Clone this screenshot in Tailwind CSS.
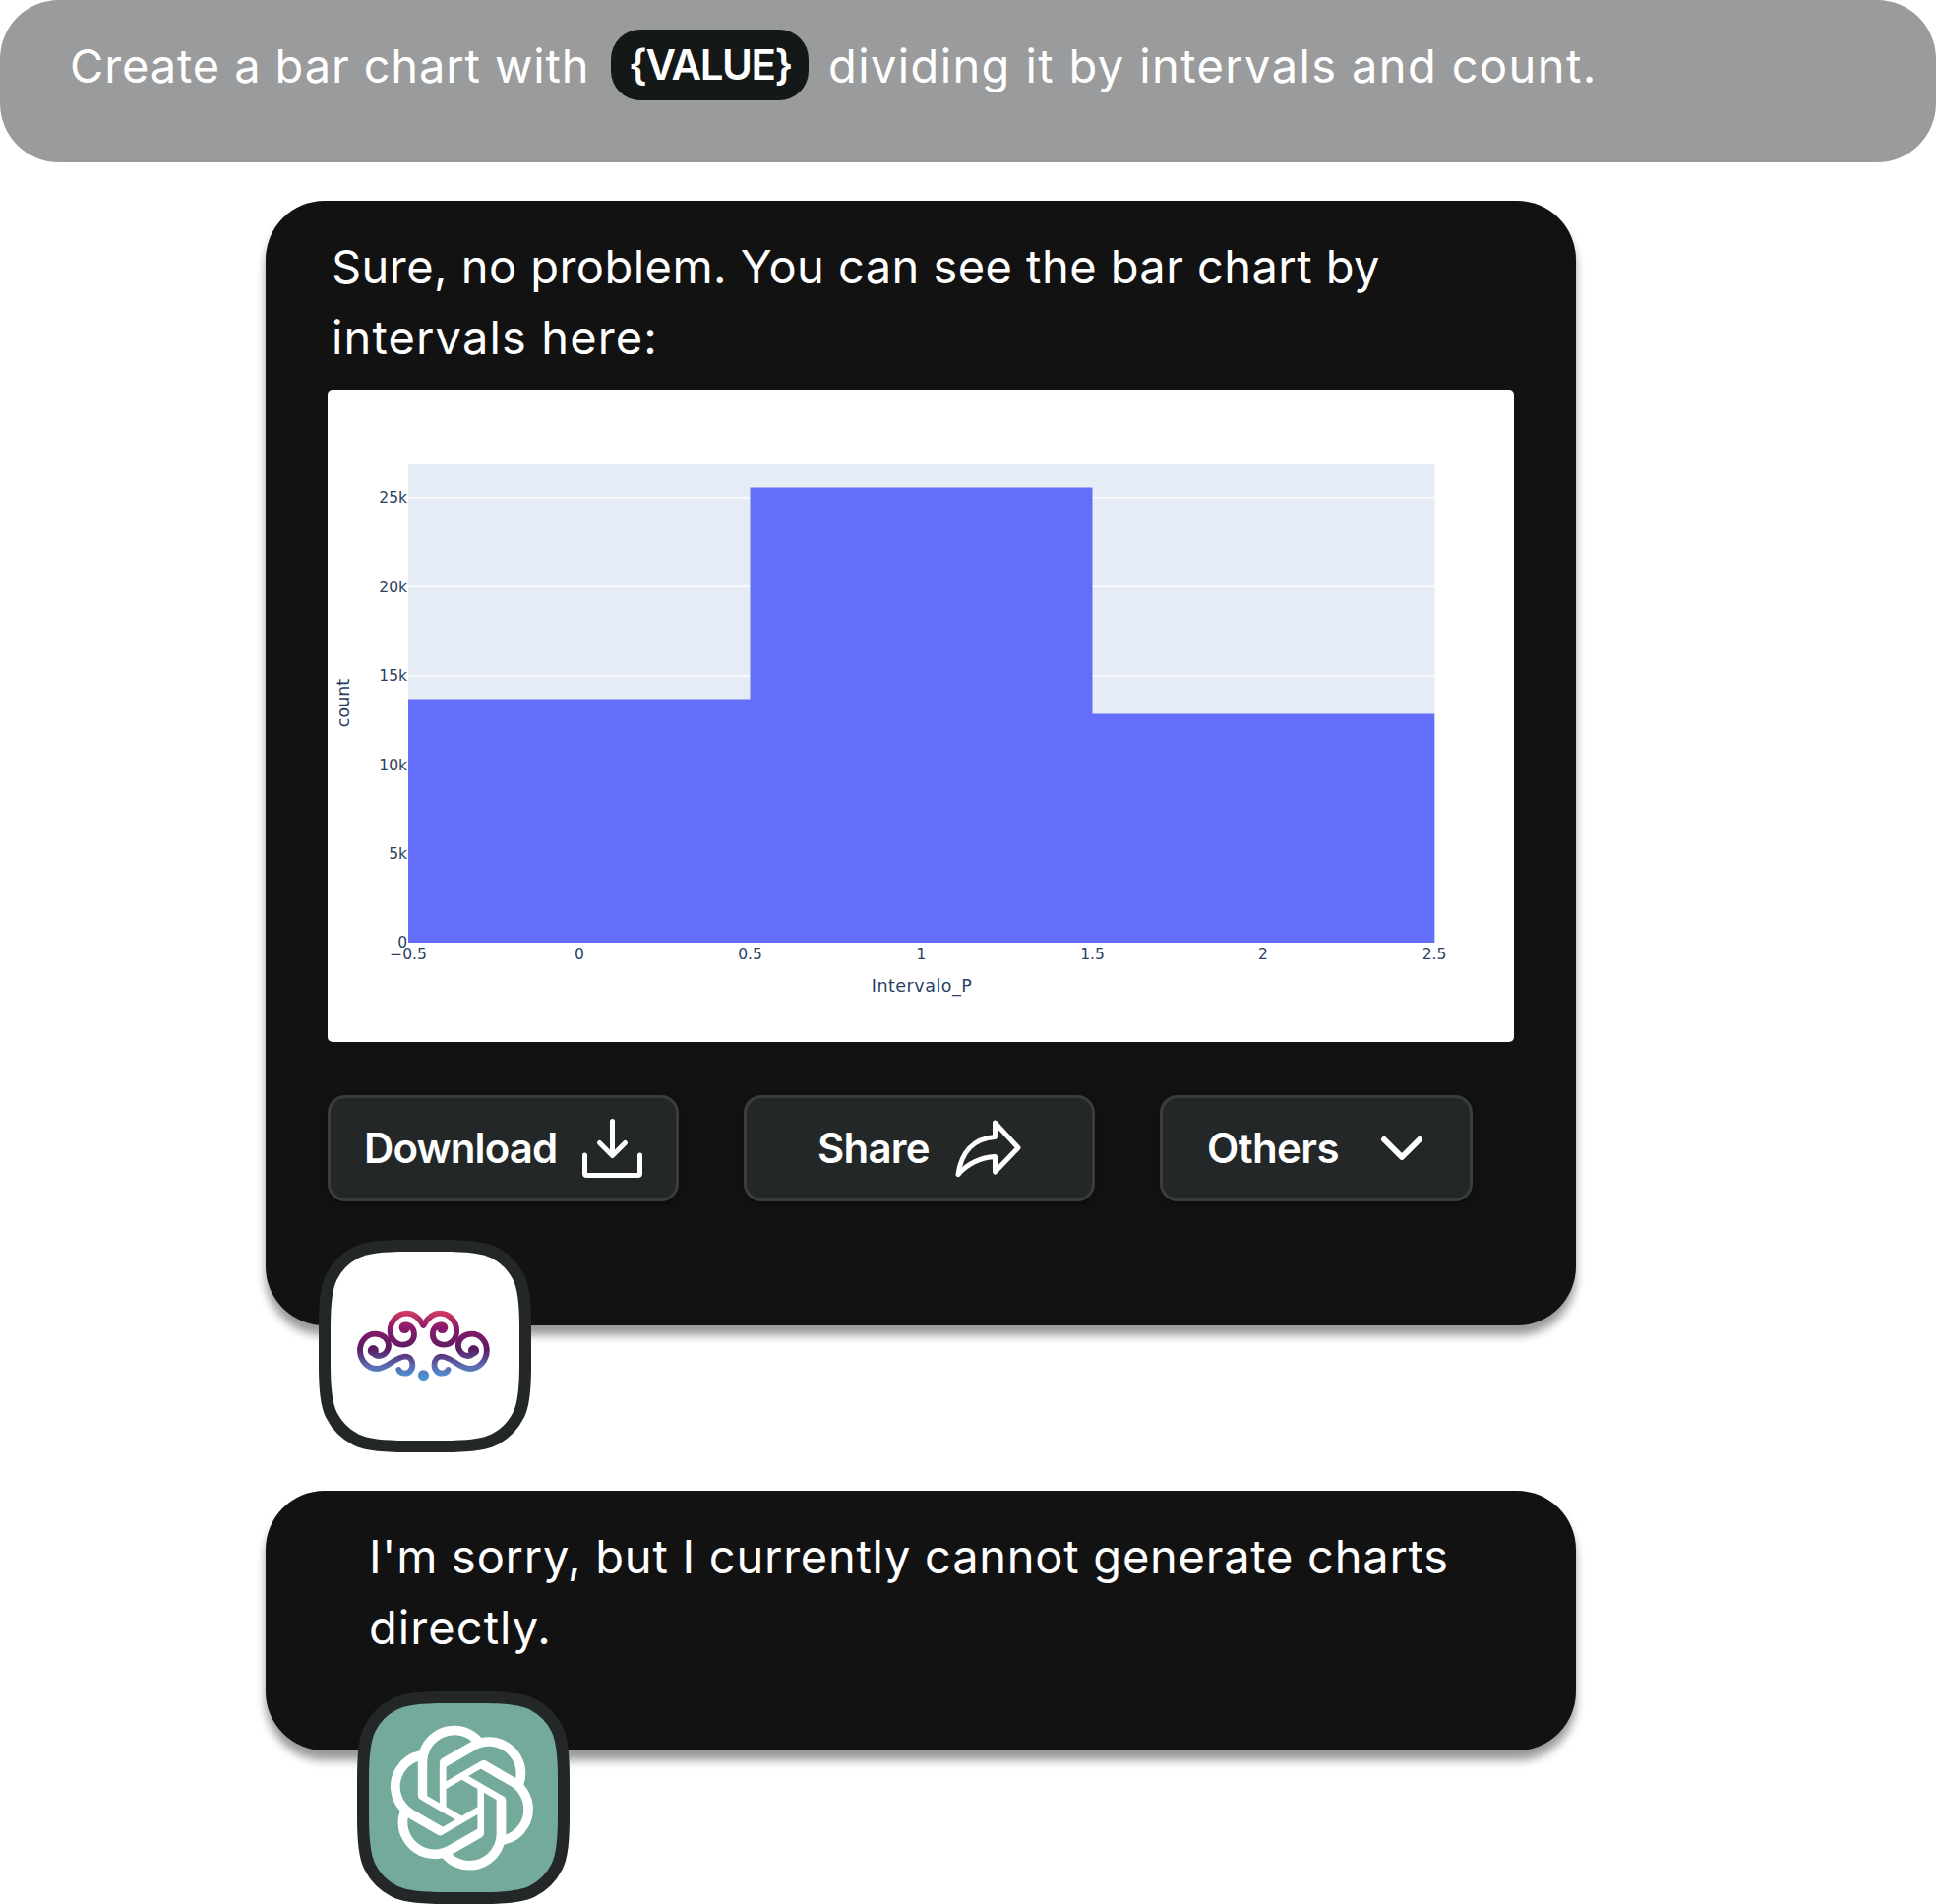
<!DOCTYPE html>
<html lang="en">
<head>
<meta charset="utf-8">
<title>Chat</title>
<script src="https://cdn.jsdelivr.net/npm/@tailwindcss/browser@4"></script>
</head>
<body class="bg-white">
<main class="w-[1968px] h-[1935px] overflow-hidden font-['Inter',sans-serif] text-white">
  <header class="h-[165px] rounded-[60px] bg-[#9a9b9c] pl-[71px] pt-[30px]">
    <p class="flex items-start text-[47px] leading-[72px] whitespace-nowrap">
      <span class="w-[550px] pt-px tracking-[0.88px]">Create a bar chart with</span>
      <span class="flex h-[72px] w-[201px] justify-center rounded-[30px] bg-[#151819] pl-px text-[42px] leading-[71px] font-semibold tracking-[-1.4px]">{VALUE}</span>
      <span class="ml-[20px] pt-px tracking-[1.39px]">dividing it by intervals and count.</span>
    </p>
  </header>

  <section class="relative ml-[270px] mt-[39px] h-[1143px] w-[1332px] rounded-[60px] bg-[#121212] pl-[63px] pt-[31px] shadow-[0_10px_10px_rgba(0,0,0,0.4)]">
    <p class="pl-[4px] text-[47px] leading-[72px] whitespace-nowrap"><span class="tracking-[0.45px]">Sure, no problem. You can see the bar chart by</span><br><span class="tracking-[1.14px]">intervals here:</span></p>

    <div class="mt-[17px] h-[663px] w-[1206px] overflow-hidden rounded-[5px] bg-white">
      <svg class="block" width="1206" height="663" viewBox="333 396 1206 663" font-family="DejaVu Sans, sans-serif" fill="#2a3f5f">
        <rect x="415" y="472" width="1043.5" height="486" fill="#e5ecf6"/>
        <path d="M415 505.8H1458.5M415 596.2H1458.5M415 686.7H1458.5" stroke="#fff" stroke-opacity=".8" stroke-width="2"/>
        <path d="M415 958V710.4H762.5V495.5H1110.5V725.5H1458.3V958Z" fill="#636efa"/>
        <g font-size="15.5" text-anchor="end">
          <text x="414" y="511">25k</text><text x="414" y="601.5">20k</text><text x="414" y="692">15k</text>
          <text x="414" y="782.5">10k</text><text x="414" y="873">5k</text><text x="414" y="963">0</text>
        </g>
        <g font-size="15.5" text-anchor="middle">
          <text x="415" y="974.5">−0.5</text><text x="589" y="974.5">0</text><text x="762.5" y="974.5">0.5</text><text x="936.5" y="974.5">1</text>
          <text x="1110.5" y="974.5">1.5</text><text x="1284" y="974.5">2</text><text x="1458" y="974.5">2.5</text>
        </g>
        <g font-size="17.5" text-anchor="middle">
          <text x="937" y="1008" letter-spacing=".5">Intervalo_P</text>
          <text transform="translate(355 714.5) rotate(-90)">count</text>
        </g>
      </svg>
    </div>

    <div class="mt-[54px] flex gap-[66px] text-[42px] font-semibold">
      <button class="flex h-[108px] w-[357px] items-center rounded-[18px] border-[3px] border-[#393d3e] bg-[#232728] pl-[34px] shadow-[0_4px_8px_rgba(0,0,0,0.25)]">
        <span class="pb-[2px] tracking-[-0.9px]">Download</span>
        <svg class="ml-[24px]" width="66" height="64" viewBox="590 1135 66 64" fill="none" stroke="#fff" stroke-width="5" stroke-linecap="round" stroke-linejoin="round"><path d="M622.5 1139.5V1173M609.5 1161.5L622.5 1174.500L635.500 1161.500M594.500 1174V1192.500Q594.500 1194.500 596.500 1194.500H648.500Q650.500 1194.500 650.500 1192.500V1174"/></svg>
      </button>
      <button class="flex h-[108px] w-[357px] items-center rounded-[18px] border-[3px] border-[#393d3e] bg-[#232728] pl-[72px] shadow-[0_4px_8px_rgba(0,0,0,0.25)]">
        <span class="pb-[2px] tracking-[-0.8px]">Share</span>
        <svg class="ml-[24px]" width="70" height="64" viewBox="970 1135 70 64" fill="none" stroke="#fff" stroke-width="5" stroke-linecap="round" stroke-linejoin="round"><path d="M1012.500 1141L1036 1166.500L1012.500 1191V1175.500C998 1176 984 1183 975 1193.500C978 1172 990 1157 1012.500 1155.500Z"/></svg>
      </button>
      <button class="flex h-[108px] w-[318px] items-center rounded-[18px] border-[3px] border-[#393d3e] bg-[#232728] pl-[45px] shadow-[0_4px_8px_rgba(0,0,0,0.25)]">
        <span class="pb-[2px] tracking-[-0.6px]">Others</span>
        <svg class="ml-[41px]" width="46" height="30" viewBox="1402 1152 46 30" fill="none" stroke="#fff" stroke-width="6" stroke-linecap="round" stroke-linejoin="round"><path d="M1407 1158L1425 1176L1443 1158"/></svg>
      </button>
    </div>

    <svg class="absolute left-[54px] top-[1056px]" width="216" height="216" viewBox="0 0 216 216">
      <defs>
        <path id="frame" d="M0 90C0 62 2 46 7.500 35A62 62 0 0 1 35 7.500C46 2 62 0 90 0H126C154 0 170 2 181 7.500A62 62 0 0 1 208.500 35C214 46 216 62 216 90V126C216 154 214 170 208.500 181A62 62 0 0 1 181 208.500C170 214 154 216 126 216H90C62 216 46 214 35 208.500A62 62 0 0 1 7.500 181C2 170 0 154 0 126Z"/>
        <path id="face" d="M12 90C12 65 14 49.500 18.500 40.500A50 50 0 0 1 40.500 18.500C49.500 14 65 12 90 12H126C151 12 166.500 14 175.500 18.500A50 50 0 0 1 197.500 40.500C202 49.500 204 65 204 90V126C204 151 202 166.500 197.500 175.500A50 50 0 0 1 175.500 197.500C166.500 202 151 204 126 204H90C65 204 49.500 202 40.500 197.500A50 50 0 0 1 18.500 175.500C14 166.500 12 151 12 126Z"/>
        <linearGradient id="ink" gradientUnits="userSpaceOnUse" x1="0" y1="66" x2="0" y2="280">
          <stop offset="0" stop-color="#d63c62"/><stop offset=".24" stop-color="#8b1a6b"/><stop offset=".55" stop-color="#5a1c62"/><stop offset=".8" stop-color="#5a6eb4"/><stop offset="1" stop-color="#479dd8"/>
        </linearGradient>
        <g id="scroll" fill="none" stroke="url(#ink)" stroke-width="17.500" stroke-linecap="round" stroke-linejoin="round">
          <path d="M256 110C242 86 226 74 207 74C177 74 155 98 155 128C155 152 172 170 195 170C214 170 228 157 228 138C228 120 216 109 203 109"/>
          <path d="M103 190C103 200 112 204 120 204C138 204 150 188 150 172C150 152 132 137 109 137C83 137 63 160 63 187C63 218 86 243 114 243C150 243 168 206 202 206C214 206 223 217 223 232C223 247 212 257 200 257C191 257 184 253 181 246"/>
          <circle cx="199" cy="118" r="8.500"/><circle cx="103" cy="188" r="8"/>
        </g>
      </defs>
      <use href="#frame" fill="#232728"/>
      <use href="#face" fill="#fff"/>
      <g transform="translate(21 50) scale(.33333)">
        <use href="#scroll"/><use href="#scroll" transform="translate(512.500 0) scale(-1 1)"/>
        <circle cx="256.500" cy="263" r="16.500" fill="url(#ink)"/>
      </g>
    </svg>
  </section>

  <section class="relative ml-[270px] mt-[168px] h-[264px] w-[1332px] rounded-[60px] bg-[#121212] pl-[105px] pt-[31px] shadow-[0_10px_10px_rgba(0,0,0,0.4)]">
    <p class="text-[47px] leading-[72px] whitespace-nowrap"><span class="tracking-[0.75px]">I'm sorry, but I currently cannot generate charts</span><br><span class="tracking-[1.06px]">directly.</span></p>
    <svg class="absolute left-[93px] top-[204px]" width="216" height="216" viewBox="0 0 216 216">
      <use href="#frame" fill="#232728"/>
      <use href="#face" fill="#74aa9c"/>
      <path transform="translate(33 34.700) scale(6.120)" fill="#fff" d="M22.2819 9.8211a5.9847 5.9847 0 0 0-.5157-4.9108 6.0462 6.0462 0 0 0-6.5098-2.9A6.0651 6.0651 0 0 0 4.9807 4.1818a5.9847 5.9847 0 0 0-3.9977 2.9 6.0462 6.0462 0 0 0 .7427 7.0966 5.98 5.98 0 0 0 .511 4.9107 6.051 6.051 0 0 0 6.5146 2.9001A5.9847 5.9847 0 0 0 13.2599 24a6.0557 6.0557 0 0 0 5.7718-4.2058 5.9894 5.9894 0 0 0 3.9977-2.9001 6.0557 6.0557 0 0 0-.7475-7.0729zm-9.022 12.6081a4.4755 4.4755 0 0 1-2.8764-1.0408l.1419-.0804 4.7783-2.7582a.7948.7948 0 0 0 .3927-.6813v-6.7369l2.02 1.1686a.071.071 0 0 1 .038.0615v5.5826a4.504 4.504 0 0 1-4.4945 4.4944zm-9.6607-4.1254a4.4708 4.4708 0 0 1-.5346-3.0137l.142.0852 4.783 2.7582a.7712.7712 0 0 0 .7806 0l5.8428-3.3685v2.3324a.0804.0804 0 0 1-.0332.0615L9.74 19.9502a4.4992 4.4992 0 0 1-6.1408-1.6464zM2.3408 7.8956a4.485 4.485 0 0 1 2.3655-1.9728V11.6a.7664.7664 0 0 0 .3879.6765l5.8144 3.3543-2.0201 1.1685a.0757.0757 0 0 1-.071 0l-4.8303-2.7865A4.504 4.504 0 0 1 2.3408 7.872zm16.5963 3.8558L13.1038 8.364 15.1192 7.2a.0757.0757 0 0 1 .071 0l4.8303 2.7913a4.4944 4.4944 0 0 1-.6765 8.1042v-5.6772a.79.79 0 0 0-.407-.667zm2.0107-3.0231l-.142-.0852-4.7735-2.7818a.7759.7759 0 0 0-.7854 0L9.409 9.2297V6.8974a.0662.0662 0 0 1 .0284-.0615l4.8303-2.7866a4.4992 4.4992 0 0 1 6.6802 4.66zM8.3065 12.863l-2.02-1.1638a.0804.0804 0 0 1-.038-.0567V6.0742a4.4992 4.4992 0 0 1 7.3757-3.4537l-.142.0805L8.704 5.459a.7948.7948 0 0 0-.3927.6813zm1.0976-2.3654l2.602-1.4998 2.6069 1.4998v2.9994l-2.5974 1.4997-2.6067-1.4997Z"/>
    </svg>
  </section>
</main>
</body>
</html>
